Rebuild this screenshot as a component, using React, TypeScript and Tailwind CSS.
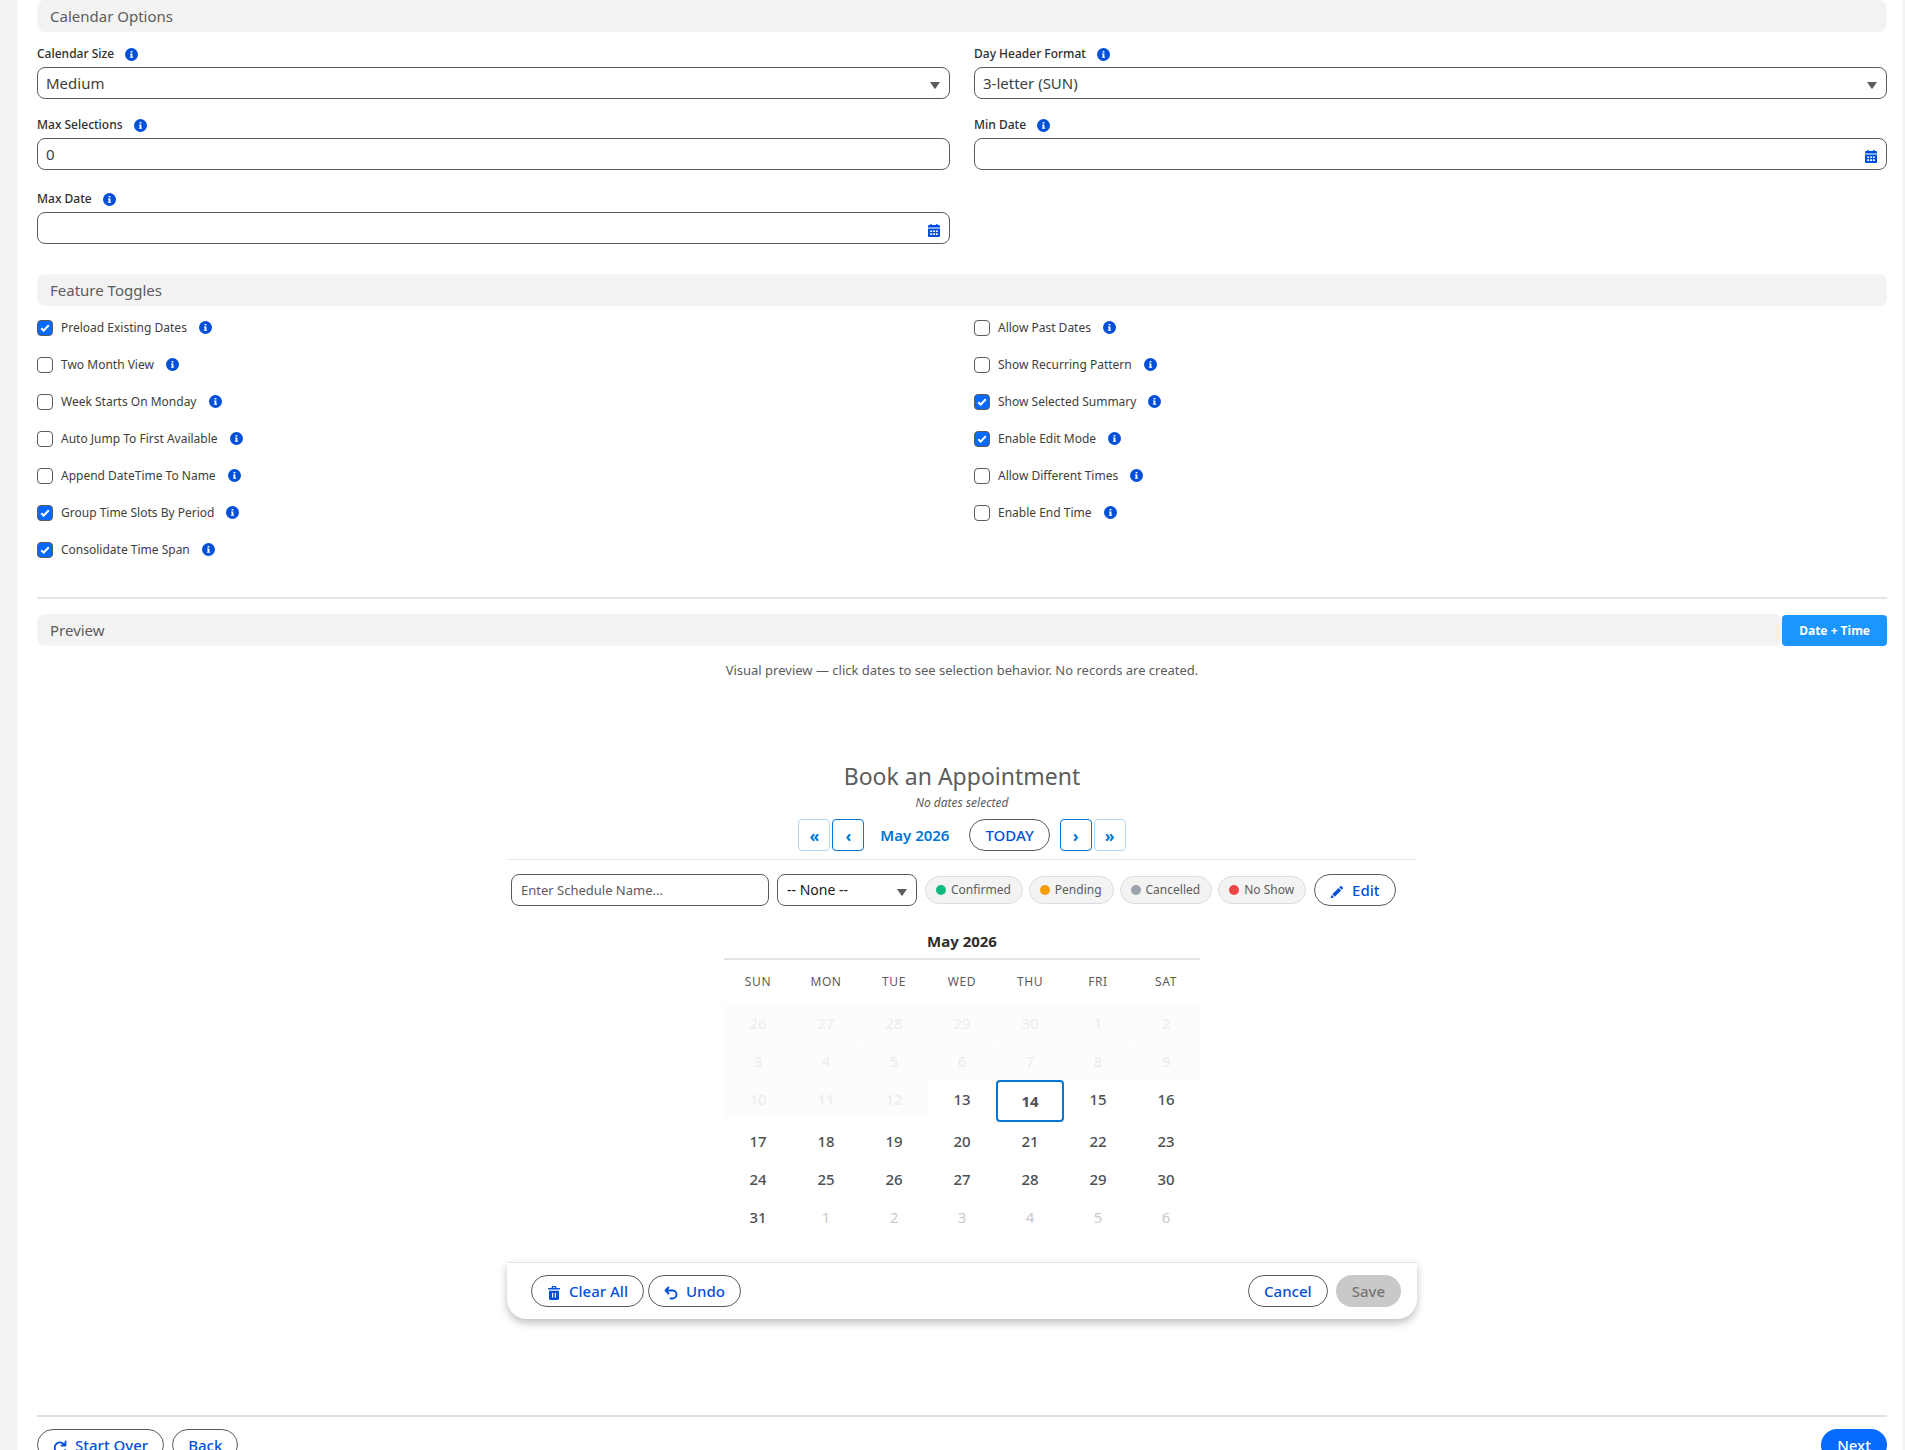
import type { ReactNode } from 'react';
import clsx from 'clsx';

const leftToggles = [
  { label: 'Preload Existing Dates', checked: true },
  { label: 'Two Month View', checked: false },
  { label: 'Week Starts On Monday', checked: false },
  { label: 'Auto Jump To First Available', checked: false },
  { label: 'Append DateTime To Name', checked: false },
  { label: 'Group Time Slots By Period', checked: true },
  { label: 'Consolidate Time Span', checked: true },
];

const rightToggles = [
  { label: 'Allow Past Dates', checked: false },
  { label: 'Show Recurring Pattern', checked: false },
  { label: 'Show Selected Summary', checked: true },
  { label: 'Enable Edit Mode', checked: true },
  { label: 'Allow Different Times', checked: false },
  { label: 'Enable End Time', checked: false },
];

const statuses = [
  { name: 'Confirmed', color: 'bg-[#10b981]' },
  { name: 'Pending', color: 'bg-[#f59e0b]' },
  { name: 'Cancelled', color: 'bg-[#9ca3af]' },
  { name: 'No Show', color: 'bg-[#ef4444]' },
];

const weekdays = ['SUN', 'MON', 'TUE', 'WED', 'THU', 'FRI', 'SAT'];

const weeks = [
  [26, 27, 28, 29, 30, 1, 2],
  [3, 4, 5, 6, 7, 8, 9],
  [10, 11, 12, 13, 14, 15, 16],
  [17, 18, 19, 20, 21, 22, 23],
  [24, 25, 26, 27, 28, 29, 30],
  [31, 1, 2, 3, 4, 5, 6],
];

const TODAY = 14;
const FIRST_OPEN = 13;

function InfoIcon() {
  return (
    <svg viewBox="0 0 13 13" className="h-[13px] w-[13px] shrink-0" aria-hidden="true">
      <circle cx="6.5" cy="6.5" r="6.5" fill="#0250d9" />
      <path d="M5.6 3h1.8v1.6H5.6zM5 5.4h2.4v3.4h.7v1H4.9v-1h.7V6.4H5z" fill="#fff" />
    </svg>
  );
}

function CalendarIcon() {
  return (
    <svg viewBox="0 0 12 13" className="h-[13px] w-3" fill="#0250d9" aria-hidden="true">
      <path d="M2.4 0h1.4v1h4.4V0h1.4v1H11a1 1 0 0 1 1 1v1.6H0V2a1 1 0 0 1 1-1h1.4z" />
      <path
        fillRule="evenodd"
        d="M0 4.6h12V12a1 1 0 0 1-1 1H1a1 1 0 0 1-1-1zM2.2 6.4v1.7h1.9V6.4zm2.9 0v1.7H7V6.4zm2.8 0v1.7h1.9V6.4zM2.2 9.2v1.7h1.9V9.2zm2.9 0v1.7H7V9.2zm2.8 0v1.7h1.9V9.2z"
      />
    </svg>
  );
}

function Caret() {
  return (
    <svg viewBox="0 0 10 7" className="pointer-events-none absolute top-[15px] right-[10px] h-[7px] w-[10px]" fill="#5c5c5c" aria-hidden="true">
      <path d="M0 0h10L5.5 6.6a.7.7 0 0 1-1 0z" />
    </svg>
  );
}

function SectionTitle({ children, className }: { children: ReactNode; className?: string }) {
  return (
    <h2 className={clsx('h-8 rounded-lg bg-[#f3f3f3] px-[13px] text-[15px] leading-8 text-[#5c5c5c]', className)}>
      {children}
    </h2>
  );
}

function FieldLabel({ id, children }: { id: string; children: ReactNode }) {
  return (
    <div className="mb-[3px] flex h-5 items-center gap-[11px]">
      <label htmlFor={id} className="text-xs font-medium text-[#2e2e2e]">{children}</label>
      <InfoIcon />
    </div>
  );
}

const control = 'h-8 w-full rounded-lg border border-[#5c5c5c] bg-white px-2 text-[15px] text-[#3e3e3c]';

function SelectField({ id, label, value }: { id: string; label: string; value: string }) {
  return (
    <div>
      <FieldLabel id={id}>{label}</FieldLabel>
      <div className="relative">
        <select id={id} className={clsx(control, 'appearance-none')}>
          <option>{value}</option>
        </select>
        <Caret />
      </div>
    </div>
  );
}

function DateField({ id, label }: { id: string; label: string }) {
  return (
    <div className="pb-[3px]">
      <FieldLabel id={id}>{label}</FieldLabel>
      <div className="relative">
        <input id={id} type="text" className={control} />
        <button type="button" aria-label={`Select ${label}`} className="absolute top-3 right-[10px]">
          <CalendarIcon />
        </button>
      </div>
    </div>
  );
}

function Toggle({ label, checked }: { label: string; checked: boolean }) {
  const id = label.toLowerCase().replace(/ /g, '-');
  return (
    <div className="flex h-[37px] items-center">
      <span className="grid h-4 w-4 place-items-center">
        <input
          id={id}
          type="checkbox"
          defaultChecked={checked}
          className="peer col-start-1 row-start-1 h-4 w-4 appearance-none rounded-[4px] border border-[#5c5c5c] bg-white checked:bg-[#066afe]"
        />
        <svg viewBox="0 0 10 8" className="pointer-events-none col-start-1 row-start-1 hidden h-2 w-[10px] peer-checked:block" aria-hidden="true">
          <path d="M1.2 4.2 3.7 6.5 8.8 1.3" fill="none" stroke="#fff" strokeWidth="2" />
        </svg>
      </span>
      <label htmlFor={id} className="mr-3 ml-2 text-xs text-[#3e3e3c]">{label}</label>
      <InfoIcon />
    </div>
  );
}

function PillButton({ children, className }: { children: ReactNode; className?: string }) {
  return (
    <button
      type="button"
      className={clsx(
        'flex h-8 items-center justify-center rounded-full border border-[#5c5c5c] bg-white px-[15px] text-[15px] font-medium text-[#0250d9]',
        className,
      )}
    >
      {children}
    </button>
  );
}

function NavButton({ label, glyph, far }: { label: string; glyph: string; far?: boolean }) {
  return (
    <button
      type="button"
      aria-label={label}
      className={clsx(
        'flex h-8 w-8 items-center justify-center rounded-[4px] border bg-white pt-[2px] text-base font-bold text-[#0176d3]',
        far ? 'border-[#b3d6f2]' : 'border-[#0176d3]',
      )}
    >
      {glyph}
    </button>
  );
}

function Calendar() {
  return (
    <div className="mx-auto mt-[23px] w-[476px]">
      <h4 className="border-b-2 border-[#e5e5e5] pb-[5px] text-center text-[15px] leading-6 font-bold text-[#2e2e2e]">May 2026</h4>
      <table className="w-full table-fixed">
        <thead>
          <tr className="h-11">
            {weekdays.map((day) => (
              <th key={day} className="text-xs font-normal tracking-wider text-[#5c5c5c]">{day}</th>
            ))}
          </tr>
        </thead>
        <tbody>
          {weeks.map((week, row) => (
            <tr key={row}>
              {week.map((day, col) => {
                const outside = (row === 0 && day > 7) || (row === 5 && day < 7);
                const past = row < 2 || (row === 2 && day < FIRST_OPEN);
                const today = row === 2 && day === TODAY;
                return (
                  <td key={col} className="p-0 align-top">
                    <button
                      type="button"
                      disabled={past}
                      className={clsx(
                        'block w-full rounded-[4px] text-[15px]',
                        today ? 'h-[42px] border-2 border-[#0176d3] font-bold' : 'h-[38px]',
                        !today && (outside ? 'font-normal' : 'font-medium'),
                        past ? 'bg-[#fcfcfc] text-[#ededed]' : outside ? 'text-[#c9c9c9]' : 'text-[#514f4d]',
                      )}
                    >
                      {day}
                    </button>
                  </td>
                );
              })}
            </tr>
          ))}
        </tbody>
      </table>
    </div>
  );
}

export default function App() {
  return (
    <div className="h-screen overflow-hidden bg-[#f3f3f3] pr-[2px] pl-[17px] font-['Noto_Sans','Open_Sans',sans-serif]">
      <main className="bg-white pr-4 pb-10 pl-5">
        <SectionTitle>Calendar Options</SectionTitle>
        <div className="grid grid-cols-2 gap-x-6 gap-y-4 pt-3">
          <SelectField id="size" label="Calendar Size" value="Medium" />
          <SelectField id="format" label="Day Header Format" value="3-letter (SUN)" />
          <div>
            <FieldLabel id="max">Max Selections</FieldLabel>
            <input id="max" type="text" defaultValue="0" className={control} />
          </div>
          <DateField id="min-date" label="Min Date" />
          <DateField id="max-date" label="Max Date" />
        </div>

        <SectionTitle className="mt-[27px]">Feature Toggles</SectionTitle>
        <div className="grid grid-cols-2 gap-x-6 pt-[3px]">
          <div>
            {leftToggles.map((t) => <Toggle key={t.label} {...t} />)}
          </div>
          <div>
            {rightToggles.map((t) => <Toggle key={t.label} {...t} />)}
          </div>
        </div>

        <div className="mt-[29px] border-t-2 border-[#e5e5e5] pt-[15px]">
          <div className="flex items-center">
            <SectionTitle className="flex-1">Preview</SectionTitle>
            <span className="rounded-[4px] bg-[#1b96ff] px-[17px] text-xs leading-[31px] font-bold text-white">Date + Time</span>
          </div>
          <p className="mt-[14px] text-center text-[13px] leading-5 text-[#5c5c5c]">
            Visual preview — click dates to see selection behavior. No records are created.
          </p>
        </div>

        <section className="mx-auto mt-20 w-[910px] max-w-full">
          <header className="flex flex-col items-center border-b border-[#e5e5e5] pb-2">
            <h3 className="text-[23px] leading-[33px] text-[#5c5c5c]">Book an Appointment</h3>
            <p className="text-xs leading-5 text-[#5c5c5c] italic">No dates selected</p>
            <div className="mt-[6px] flex items-center">
              <div className="flex gap-[2px]">
                <NavButton label="Previous year" glyph="«" far />
                <NavButton label="Previous month" glyph="‹" />
              </div>
              <span className="mr-5 ml-4 text-[15px] font-semibold text-[#0176d3]">May 2026</span>
              <PillButton>TODAY</PillButton>
              <div className="ml-[10px] flex gap-[2px]">
                <NavButton label="Next month" glyph="›" />
                <NavButton label="Next year" glyph="»" far />
              </div>
            </div>
          </header>

          <div className="mt-[14px] flex items-center gap-2 pl-1">
            <input
              type="text"
              aria-label="Schedule name"
              placeholder="Enter Schedule Name..."
              className="h-8 w-[258px] rounded-lg border border-[#5c5c5c] bg-white px-[9px] text-[13px] placeholder:text-[#5c5c5c]"
            />
            <div className="relative w-[140px]">
              <select
                aria-label="Status"
                className="h-8 w-full appearance-none rounded-lg border border-[#5c5c5c] bg-white px-[9px] text-sm text-[#181818]"
              >
                <option>-- None --</option>
              </select>
              <Caret />
            </div>
            <div className="flex gap-[6px]">
              {statuses.map((s) => (
                <span key={s.name} className="flex h-7 items-center gap-[5px] rounded-full border border-[#dddbe4] bg-[#f3f3f3] pr-[11px] pl-[10px] text-xs text-[#5c5c5c]">
                  <span className={clsx('h-[10px] w-[10px] rounded-full', s.color)} />
                  {s.name}
                </span>
              ))}
            </div>
            <PillButton className="gap-2">
              <svg viewBox="0 0 14 14" className="mt-1 h-[14px] w-[14px]" fill="#0250d9" aria-hidden="true">
                <path d="M10.3 1.2a.9.9 0 0 1 1.2 0l1.3 1.3a.9.9 0 0 1 0 1.2l-1 1-2.5-2.5zM8.6 2.9l2.5 2.5-6.3 6.3-2.5-2.5zM1.7 10l2.3 2.3-3 .9c-.3.1-.5-.1-.4-.4z" />
              </svg>
              Edit
            </PillButton>
          </div>

          <Calendar />

          <footer className="mt-[26px] flex items-center rounded-b-[20px] border-t border-[#e5e5e5] bg-white py-3 pr-4 pl-6 shadow-[0_4px_8px_rgba(0,0,0,0.25)]">
            <PillButton className="gap-2">
              <svg viewBox="0 0 12 14" className="mt-1 h-[14px] w-[14px]" fill="#0250d9" aria-hidden="true">
                <path d="M3.6 2V1.4C3.6.6 4.2 0 5 0h2c.8 0 1.4.6 1.4 1.4V2h3.1c.3 0 .5.2.5.5v.6c0 .3-.2.5-.5.5H.5c-.3 0-.5-.2-.5-.5v-.6C0 2.2.2 2 .5 2zm1.3 0h2.2v-.5c0-.2-.1-.3-.3-.3H5.2c-.2 0-.3.1-.3.3z" fillRule="evenodd" />
                <path d="M1 4.8h10v7.7c0 .8-.7 1.5-1.5 1.5h-7C1.7 14 1 13.3 1 12.5zM4 7v4.5h1.2V7zM6.8 7v4.5H8V7z" fillRule="evenodd" />
              </svg>
              Clear All
            </PillButton>
            <PillButton className="ml-1 gap-2">
              <svg viewBox="0 0 14 14" className="mt-1 h-[14px] w-[14px]" fill="none" stroke="#0250d9" strokeWidth="1.8" strokeLinecap="round" strokeLinejoin="round" aria-hidden="true">
                <path d="M4.5 1.5 1.5 4.5l3 3M2 4.5h6.500a4 4 0 0 1 0 8H6.5" />
              </svg>
              Undo
            </PillButton>
            <PillButton className="mr-2 ml-auto">Cancel</PillButton>
            <button type="button" disabled className="h-8 rounded-full bg-[#c9c9c9] px-4 text-[15px] font-medium text-[#757575]">Save</button>
          </footer>
        </section>

        <div className="mt-24 flex gap-2 border-t-2 border-[#e0e0e0] pt-3">
          <PillButton className="gap-2">
            <svg viewBox="0 0 14 14" className="mt-1 h-[14px] w-[14px]" fill="none" stroke="#0250d9" strokeWidth="1.8" strokeLinecap="round" strokeLinejoin="round" aria-hidden="true">
              <path d="M12.5 1.5V5.5H8.5M12 5.5A5.4 5.4 0 1 0 12 10" />
            </svg>
            Start Over
          </PillButton>
          <PillButton>Back</PillButton>
          <button type="button" className="ml-auto h-8 rounded-full bg-[#066afe] px-4 text-[15px] font-medium text-white">Next</button>
        </div>
      </main>
    </div>
  );
}
